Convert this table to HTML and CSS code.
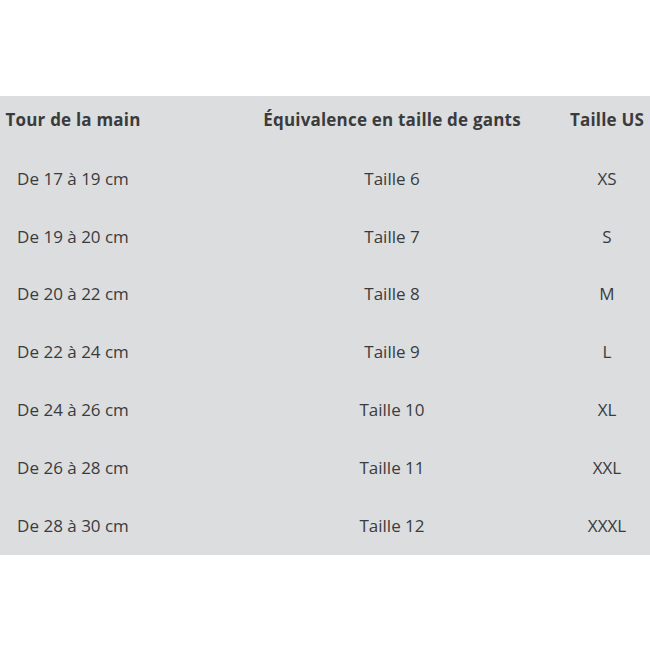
FILE: index.html
```html
<!DOCTYPE html>
<html lang="fr">
<head>
<meta charset="utf-8">
<title>Guide des tailles</title>
<link rel="stylesheet" href="styles.css">
</head>
<body>
<div class="page">
  <div class="size-table">
    <div class="cell head c1">Tour de la main</div>
    <div class="cell head c2">Équivalence en taille de gants</div>
    <div class="cell head c3">Taille US</div>

    <div class="cell c1">De 17 à 19 cm</div>
    <div class="cell c2">Taille 6</div>
    <div class="cell c3">XS</div>

    <div class="cell c1">De 19 à 20 cm</div>
    <div class="cell c2">Taille 7</div>
    <div class="cell c3">S</div>

    <div class="cell c1">De 20 à 22 cm</div>
    <div class="cell c2">Taille 8</div>
    <div class="cell c3">M</div>

    <div class="cell c1">De 22 à 24 cm</div>
    <div class="cell c2">Taille 9</div>
    <div class="cell c3">L</div>

    <div class="cell c1">De 24 à 26 cm</div>
    <div class="cell c2">Taille 10</div>
    <div class="cell c3">XL</div>

    <div class="cell c1">De 26 à 28 cm</div>
    <div class="cell c2">Taille 11</div>
    <div class="cell c3">XXL</div>

    <div class="cell c1">De 28 à 30 cm</div>
    <div class="cell c2">Taille 12</div>
    <div class="cell c3">XXXL</div>
  </div>
</div>
</body>
</html>
```

FILE: styles.css
```css
html, body {
  margin: 0;
  padding: 0;
  background: #ffffff;
}

.page {
  width: 650px;
  height: 650px;
  padding-top: 96px;
  box-sizing: border-box;
}

.size-table {
  background: #dcdddf;
  display: grid;
  grid-template-columns: 146px 418px 86px;
  grid-template-rows: 54px repeat(7, 57.8px);
  font-family: "Open Sans", "Liberation Sans", sans-serif;
  font-size: 17px;
  color: #3a3b3d;
  width: 650px;
}

.cell {
  display: flex;
  align-items: center;
  justify-content: center;
  white-space: nowrap;
  line-height: 24px;
}

.c2 {
  margin-left: 74px;
}

.head {
  align-items: flex-start;
  padding-top: 12px;
  font-weight: 700;
  font-size: 17px;
  letter-spacing: 0.2px;
}
```
